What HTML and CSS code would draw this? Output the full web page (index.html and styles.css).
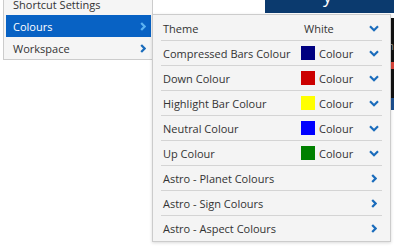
FILE: index.html
```html
<!DOCTYPE html>
<html lang="en">
<head>
    <meta charset="UTF-8">
    <title>Settings menu</title>
    <link rel="stylesheet" href="styles.css">
</head>
<body>
    <div class="app">
        <div class="topbar"><span class="brand">y</span></div>
        <div class="chart">
            <span class="chart-label">h</span>
            <div class="chart-red"></div>
        </div>
        <div class="chart-foot"></div>
    </div>

    <ul class="menu">
        <li class="menu-item">Shortcut Settings</li>
        <li class="menu-item active">Colours
            <svg class="arrow-right" width="6" height="9" viewBox="0 0 6 9"><path d="M1.2 1 L4.6 4.5 L1.2 8"/></svg>
        </li>
        <li class="menu-item">Workspace
            <svg class="arrow-right" width="6" height="9" viewBox="0 0 6 9"><path d="M1.2 1 L4.6 4.5 L1.2 8"/></svg>
        </li>
    </ul>

    <ul class="panel">
        <li class="row">
            <span class="label">Theme</span>
            <span class="value theme">White</span>
            <svg class="arrow-down" width="10" height="7" viewBox="0 0 10 7"><path d="M1 1.3 L5 5.2 L9 1.3"/></svg>
        </li>
        <li class="row">
            <span class="label">Compressed Bars Colour</span>
            <span class="swatch" style="background:#000080"></span>
            <span class="value">Colour</span>
            <svg class="arrow-down" width="10" height="7" viewBox="0 0 10 7"><path d="M1 1.3 L5 5.2 L9 1.3"/></svg>
        </li>
        <li class="row">
            <span class="label">Down Colour</span>
            <span class="swatch" style="background:#cc0000"></span>
            <span class="value">Colour</span>
            <svg class="arrow-down" width="10" height="7" viewBox="0 0 10 7"><path d="M1 1.3 L5 5.2 L9 1.3"/></svg>
        </li>
        <li class="row">
            <span class="label">Highlight Bar Colour</span>
            <span class="swatch" style="background:#ffff00"></span>
            <span class="value">Colour</span>
            <svg class="arrow-down" width="10" height="7" viewBox="0 0 10 7"><path d="M1 1.3 L5 5.2 L9 1.3"/></svg>
        </li>
        <li class="row">
            <span class="label">Neutral Colour</span>
            <span class="swatch" style="background:#0000ff"></span>
            <span class="value">Colour</span>
            <svg class="arrow-down" width="10" height="7" viewBox="0 0 10 7"><path d="M1 1.3 L5 5.2 L9 1.3"/></svg>
        </li>
        <li class="row">
            <span class="label">Up Colour</span>
            <span class="swatch" style="background:#008000"></span>
            <span class="value">Colour</span>
            <svg class="arrow-down" width="10" height="7" viewBox="0 0 10 7"><path d="M1 1.3 L5 5.2 L9 1.3"/></svg>
        </li>
        <li class="row">
            <span class="label">Astro - Planet Colours</span>
            <svg class="arrow-right" width="6" height="9" viewBox="0 0 6 9"><path d="M1.2 1 L4.6 4.5 L1.2 8"/></svg>
        </li>
        <li class="row">
            <span class="label">Astro - Sign Colours</span>
            <svg class="arrow-right" width="6" height="9" viewBox="0 0 6 9"><path d="M1.2 1 L4.6 4.5 L1.2 8"/></svg>
        </li>
        <li class="row">
            <span class="label">Astro - Aspect Colours</span>
            <svg class="arrow-right" width="6" height="9" viewBox="0 0 6 9"><path d="M1.2 1 L4.6 4.5 L1.2 8"/></svg>
        </li>
    </ul>
</body>
</html>
```

FILE: styles.css
```css
body {
    margin: 0;
    background-color: #fff;
    font-family: "Open Sans", Arial, sans-serif;
    font-size: 11px;
    color: #333;
    overflow: hidden;
}
.app {
    padding-left: 265px;
}
.topbar {
    height: 13px;
    background-color: #0b3a6e;
    color: #fff;
    font-size: 18px;
    line-height: 13px;
    overflow: hidden;
}
.brand {
    display: block;
    margin-left: 58px;
    margin-top: -10px;
}
.chart {
    margin-top: 5px;
    height: 80px;
    background-color: #111;
    display: flex;
    flex-direction: column;
    align-items: flex-end;
}
.chart-label {
    margin-top: 24px;
    color: #999;
    font-size: 10px;
    line-height: 8px;
}
.chart-red {
    margin-top: 12px;
    width: 10px;
    height: 7px;
    background-color: #d9443a;
}
.chart-foot {
    height: 12px;
    background-color: #1c4f8f;
}
ul {
    list-style: none;
    margin: 0;
}
.menu {
    position: absolute;
    left: 3px;
    top: -8px;
    width: 145px;
    padding: 0 1px 0 2px;
    background-color: #f5f5f5;
    border: 1px solid #ccc;
}
.menu-item {
    height: 22px;
    padding: 0 5px 0 7px;
    display: flex;
    align-items: center;
    justify-content: space-between;
}
.menu-item.active {
    background-color: #0862c4;
    color: #fff;
}
.arrow-right path, .arrow-down path {
    fill: none;
    stroke: #1a6cbc;
    stroke-width: 2.2;
}
.active .arrow-right path {
    stroke: #5cb3f2;
}
.panel {
    position: absolute;
    left: 152px;
    top: 14px;
    width: 221px;
    padding: 1px 8px 1px;
    background-color: #f4f4f4;
    border: 1px solid #ccc;
    box-shadow: 0 1px 3px rgba(0, 0, 0, 0.15);
}
.row {
    height: 24px;
    padding: 0 3px 0 2px;
    border-bottom: 1px solid #d4d4d4;
    display: flex;
    align-items: center;
}
.row:last-child {
    border-bottom: none;
}
.label {
    flex: 1;
}
.swatch {
    width: 14px;
    height: 14px;
    margin-right: 4px;
}
.value {
    width: 46px;
}
.value.theme {
    width: 61px;
}
.arrow-down {
    margin-left: 4px;
}
.row .arrow-right {
    margin-right: 2px;
}
```
